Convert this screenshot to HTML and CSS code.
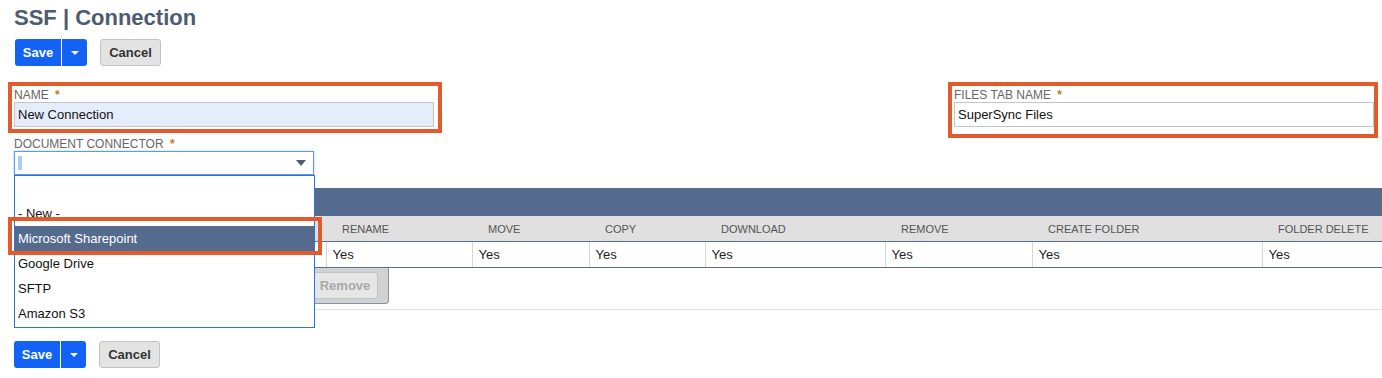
FILE: index.html
```html
<!DOCTYPE html>
<html lang="en">
<head>
  <meta charset="UTF-8">
  <title>SSF | Connection</title>
  <link rel="stylesheet" href="styles.css">
</head>
<body>
  <div class="page">
    <h1 class="title">SSF | Connection</h1>

    <div class="actions">
      <div class="split-btn">
        <button class="btn-save">Save</button>
        <button class="btn-menu"><span class="caret"></span></button>
      </div>
      <button class="btn-cancel">Cancel</button>
    </div>

    <div class="fields">
      <div class="field mark mark-name">
        <label>NAME <span class="req">*</span></label>
        <div class="input input-filled">New Connection</div>
      </div>
      <div class="field mark mark-tab">
        <label>FILES TAB NAME <span class="req">*</span></label>
        <div class="input">SuperSync Files</div>
      </div>
    </div>

    <div class="field field-connector">
      <label>DOCUMENT CONNECTOR <span class="req">*</span></label>
      <div class="select">
        <span class="sel-cursor"></span>
        <span class="sel-arrow"></span>
        <ul class="options">
          <li>&nbsp;</li>
          <li>- New -</li>
          <li class="selected mark mark-option">Microsoft Sharepoint</li>
          <li>Google Drive</li>
          <li>SFTP</li>
          <li>Amazon S3</li>
        </ul>
      </div>
    </div>

    <div class="sublist">
      <div class="tabbar"></div>
      <table class="grid">
        <colgroup>
          <col style="width: 166px">
          <col style="width: 146px">
          <col style="width: 146px">
          <col style="width: 117px">
          <col style="width: 116px">
          <col style="width: 180px">
          <col style="width: 147px">
          <col style="width: 230px">
          <col style="width: 120px">
        </colgroup>
        <thead>
          <tr>
            <th></th>
            <th></th>
            <th>RENAME</th>
            <th>MOVE</th>
            <th>COPY</th>
            <th>DOWNLOAD</th>
            <th>REMOVE</th>
            <th>CREATE FOLDER</th>
            <th>FOLDER DELETE</th>
          </tr>
        </thead>
        <tbody>
          <tr>
            <td></td>
            <td></td>
            <td>Yes</td>
            <td>Yes</td>
            <td>Yes</td>
            <td>Yes</td>
            <td>Yes</td>
            <td>Yes</td>
            <td>Yes</td>
          </tr>
        </tbody>
      </table>
      <div class="machine-buttons">
        <button class="btn-small disabled">Remove</button>
      </div>
    </div>

    <div class="actions actions-bottom">
      <div class="split-btn">
        <button class="btn-save">Save</button>
        <button class="btn-menu"><span class="caret"></span></button>
      </div>
      <button class="btn-cancel">Cancel</button>
    </div>
  </div>
</body>
</html>
```

FILE: styles.css
```css
body {
  margin: 0;
  font-family: "Liberation Sans", Arial, sans-serif;
  background-color: #fff;
  color: #222;
}

.page {
  padding: 5px 8px 0 14px;
}

.title {
  margin: 0;
  font-size: 22px;
  line-height: 26px;
  font-weight: bold;
  color: #4d5b73;
}

/* buttons */

.actions {
  display: flex;
  gap: 13px;
  margin-top: 8px;
  padding-left: 1px;
}

.actions-bottom {
  margin-top: 31px;
  padding-left: 0;
}

.split-btn {
  display: flex;
  height: 27px;
  border-radius: 3px;
  overflow: hidden;
  background-color: #1262f6;
}

.split-btn button {
  border: none;
  background: none;
  color: #fff;
  font-family: inherit;
  font-size: 13px;
  font-weight: bold;
  padding: 0;
  cursor: pointer;
}

.btn-save {
  width: 47px;
  border-right: 1px solid #fff !important;
}

.btn-menu {
  width: 25px;
  display: flex;
  align-items: center;
  justify-content: center;
}

.caret {
  width: 0;
  height: 0;
  border-left: 4px solid transparent;
  border-right: 4px solid transparent;
  border-top: 4px solid #fff;
  margin-top: 1px;
}

.btn-cancel {
  height: 27px;
  width: 61px;
  padding: 0;
  border: 1px solid #c2c2c2;
  border-radius: 3px;
  background-color: #e3e3e3;
  color: #333;
  font-family: inherit;
  font-size: 13px;
  font-weight: bold;
}

/* fields */

.fields {
  display: flex;
  justify-content: space-between;
  margin-top: 22px;
}

.field {
  width: 420px;
  position: relative;
}

.field label {
  display: block;
  font-size: 12px;
  line-height: 14px;
  color: #666;
}

.req {
  color: #c77a2a;
  font-weight: bold;
  margin-left: 3px;
}

.input {
  box-sizing: border-box;
  height: 25px;
  border: 1px solid #c4c4c4;
  padding: 0 3px;
  font-size: 13px;
  line-height: 23px;
  color: #111;
  background-color: #fff;
}

.input-filled {
  background-color: #e5edfb;
}

.field-connector {
  width: 300px;
  margin-top: 10px;
}

.select {
  position: relative;
  box-sizing: border-box;
  height: 24px;
  border: 1px solid #5c9be6;
  box-shadow: 0 0 2px #9cc3f2;
  background-color: #fff;
}

.sel-cursor {
  position: absolute;
  left: 3px;
  top: 4px;
  width: 4px;
  height: 14px;
  background-color: #a9cdf6;
}

.sel-arrow {
  position: absolute;
  right: 7px;
  top: 8px;
  width: 0;
  height: 0;
  border-left: 5px solid transparent;
  border-right: 5px solid transparent;
  border-top: 6px solid #4d5b73;
}

.options {
  position: absolute;
  top: calc(100% + 1px);
  left: -1px;
  width: 301px;
  box-sizing: border-box;
  margin: 0;
  padding: 0 0 1px;
  list-style: none;
  border: 1px solid #2f72dc;
  background-color: #fff;
  z-index: 10;
}

.options li {
  position: relative;
  height: 25px;
  line-height: 25px;
  padding-left: 3px;
  font-size: 13px;
  color: #111;
}

.options li.selected {
  background-color: #556b8d;
  color: #fff;
}

/* orange call-out boxes */

.mark::after {
  content: "";
  position: absolute;
  border: 4px solid #e25b2d;
  pointer-events: none;
}

.mark-name::after {
  top: -6px;
  left: -6px;
  right: -8px;
  bottom: -6px;
}

.mark-tab::after {
  top: -6px;
  left: -6px;
  right: -4px;
  bottom: -11px;
}

.mark-option::after {
  top: -9px;
  left: -7px;
  right: -8px;
  bottom: -4px;
}

/* sublist */

.sublist {
  margin-top: 13px;
  margin-right: -8px;
  border-bottom: 1px solid #e3e3e3;
}

.tabbar {
  height: 28px;
  background-color: #556b8d;
}

.grid {
  width: 100%;
  table-layout: fixed;
  border-collapse: collapse;
}

.grid th {
  height: 25px;
  padding: 0 0 0 16px;
  text-align: left;
  font-size: 11px;
  font-weight: normal;
  color: #555;
  background-color: #e0e0e0;
  border-bottom: 1px solid #5a6e90;
}

.grid td {
  height: 25px;
  padding: 0 0 0 6px;
  font-size: 13px;
  color: #222;
  border-left: 1px solid #d6d6d6;
  border-bottom: 1px solid #5a6e90;
}

.grid td:first-child {
  border-left: none;
}

.machine-buttons {
  display: flex;
  justify-content: flex-end;
  width: 375px;
  box-sizing: border-box;
  padding: 4px 10px 4px 4px;
  margin-bottom: 5px;
  background-color: #d2d2d2;
  border-right: 1px solid #8593aa;
  border-bottom: 1px solid #8593aa;
  border-bottom-right-radius: 4px;
}

.btn-small {
  height: 27px;
  padding: 0 8px;
  border: 1px solid #c4c4c4;
  border-radius: 3px;
  background-color: #e6e6e6;
  color: #333;
  font-family: inherit;
  font-size: 13px;
  font-weight: bold;
}

.btn-small.disabled {
  width: 66px;
  padding: 0;
  color: #a8a8a8;
}
```
